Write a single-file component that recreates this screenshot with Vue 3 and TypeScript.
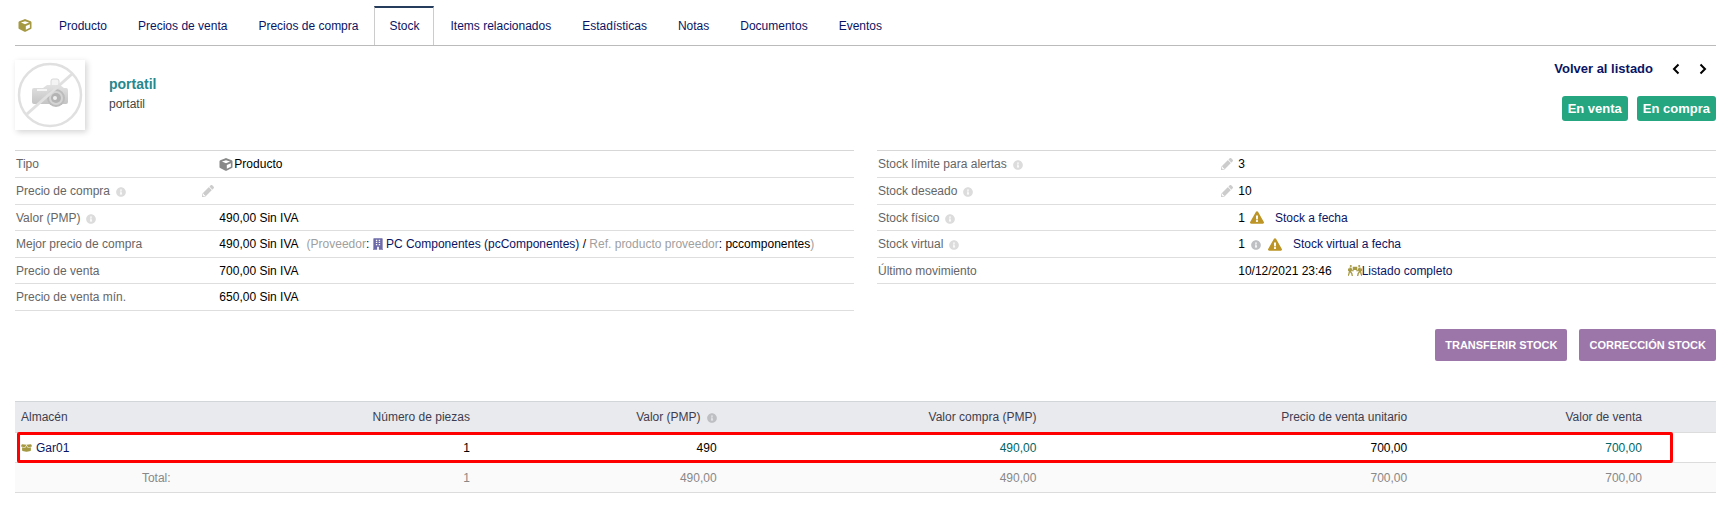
<script setup lang="ts">
import { h, type FunctionalComponent } from 'vue'

interface Glyph {
  box: string
  d: string
}

const windows = [64, 160, 256]
  .flatMap((y) => [128, 256].map((x) => `M${x} ${y}h64v56h-64z`))
  .join('')

const glyphs: Record<string, Glyph> = {
  cube: {
    box: '0 0 512 512',
    d: 'M239.1 6.3l-208 78c-18.7 7-31.1 25-31.1 45v225.1c0 18.2 10.3 34.8 26.5 42.9l208 104c13.5 6.8 29.4 6.8 42.9 0l208-104c16.3-8.1 26.5-24.8 26.5-42.9V129.3c0-20-12.4-37.9-31.1-44.9l-208-78C262 2.2 250 2.2 239.1 6.3zM256 84l160 57-160 62-160-62zM288 424V275.500l160-65v133.900z',
  },
  info: {
    box: '0 0 512 512',
    d: 'M256 8C119 8 8 119 8 256s111 248 248 248 248-111 248-248S393 8 256 8zm0 110c23.200 0 42 18.800 42 42s-18.800 42-42 42-42-18.800-42-42 18.800-42 42-42zm56 254c0 6.600-5.400 12-12 12h-88c-6.600 0-12-5.400-12-12v-24c0-6.600 5.400-12 12-12h12v-64h-12c-6.600 0-12-5.400-12-12v-24c0-6.600 5.400-12 12-12h64c6.600 0 12 5.400 12 12v100h12c6.600 0 12 5.400 12 12v24z',
  },
  pencil: {
    box: '0 0 512 512',
    d: 'M497.9 142.1l-46.100 46.100c-4.700 4.700-12.300 4.700-17 0l-111-111c-4.700-4.700-4.700-12.300 0-17l46.100-46.100c18.700-18.700 49.100-18.700 67.900 0l60.100 60.100c18.800 18.700 18.800 49.100 0 67.900zM284.200 99.800L21.600 362.400.4 483.900c-2.900 16.400 11.400 30.600 27.800 27.800l121.500-21.300 262.600-262.600c4.700-4.700 4.700-12.300 0-17l-111-111c-4.800-4.700-12.400-4.700-17.100 0zM88 424h48v36.300l-64.500 11.300-31.100-31.100L51.700 376H88v48z',
  },
  warning: {
    box: '0 0 576 512',
    d: 'M569.500 440C588 472 564.800 512 528 512H48c-37 0-60-40-41.500-72L246.400 24c18.500-32 64.700-32 83.200 0l239.900 416zM288 354c-25.400 0-46 20.600-46 46s20.600 46 46 46 46-20.600 46-46-20.600-46-46-46zm-43.700-165.300l7.400 136c.4 6.300 5.700 11.300 12 11.300h48.600c6.400 0 11.600-5 12-11.300l7.400-136c.4-6.900-5.100-12.700-12-12.700h-63.400c-6.900 0-12.400 5.800-12 12.700z',
  },
  building: {
    box: '0 0 448 512',
    d: `M448 480h-16V24c0-13-11-24-24-24H40C27 0 16 11 16 24v456H0v32h184v-128h80v128h184z${windows}`,
  },
  boxOpen: {
    box: '0 0 640 512',
    d: 'M425.700 256c-16.900 0-32.800-9-41.400-23.400L320 126l-64.200 106.600c-8.700 14.500-24.600 23.500-41.500 23.500-4.500 0-9-.6-13.300-1.900L64 215v178c0 14.700 10 27.500 24.200 31l216.200 54.100c10.200 2.500 20.900 2.500 31 0L551.800 424c14.200-3.600 24.200-16.400 24.200-31V215l-137 39.100c-4.300 1.300-8.800 1.900-13.300 1.900zm212.600-112.200L586.800 41c-3.100-6.200-9.800-9.800-16.700-8.900L320 64l91.700 152.100c3.800 6.300 11.400 9.300 18.500 7.300l197.900-56.500c9.900-2.900 14.700-13.900 10.200-23.100zM53.200 41L1.700 143.800c-4.600 9.200.3 20.200 10.100 23l197.900 56.500c7.100 2 14.700-1 18.500-7.300L320 64 69.800 32.100c-6.900-.8-13.500 2.700-16.600 8.900z',
  },
  carry: {
    box: '0 0 640 512',
    d: 'M128 0a48 48 0 1 0 0 96 48 48 0 0 0 0-96zM512 0a48 48 0 1 0 0 96 48 48 0 0 0 0-96zM216 80h208v152H216zM64 120h88l52 120h60v48h-92l-20-36v56l52 68 24 128-60 8-24-112-56-64-16 84-40 92-56-20 38-88 22-116zM0 160h44v120H0zM576 120h-88l-52 120h-60v48h92l20-36v56l-52 68-24 128 60 8 24-112 56-64 16 84 40 92 56-20-38-88-22-116zM596 160h44v120h-44z',
  },
}

const Icon: FunctionalComponent<{ name: string }> = (props) =>
  h('svg', { viewBox: glyphs[props.name].box, 'aria-hidden': 'true' }, [
    h('path', { d: glyphs[props.name].d, fill: 'currentColor', 'fill-rule': 'evenodd' }),
  ])
Icon.props = ['name']

const tabs = [
  'Producto',
  'Precios de venta',
  'Precios de compra',
  'Stock',
  'Items relacionados',
  'Estadísticas',
  'Notas',
  'Documentos',
  'Eventos',
]
const activeTab = 'Stock'
</script>

<template>
  <main class="page">
    <nav class="tabs" aria-label="Secciones del producto">
      <Icon name="cube" class="icon gold tab-icon" />
      <a v-for="tab in tabs" :key="tab" href="#" class="tab" :class="{ active: tab === activeTab }">{{ tab }}</a>
    </nav>

    <header class="banner">
      <div class="photo">
        <svg viewBox="0 0 70 70" role="img" aria-label="Sin foto">
          <defs>
            <linearGradient id="body" x1="0" y1="0" x2="0" y2="1">
              <stop offset="0" stop-color="#e2e2e2" />
              <stop offset="1" stop-color="#c4c4c4" />
            </linearGradient>
          </defs>
          <path d="M36 28v-7q0-2 2-2h4q2 0 2 2v7z" fill="#f4f4f4" stroke="#d8d8d8" />
          <path d="M17 30q0-2 2-2h9l4-3h13l4 3h2q2 0 2 2v12q0 2-2 2H19q-2 0-2-2z" fill="url(#body)" />
          <path d="M22 30h10" stroke="#f5f5f5" stroke-width="2" />
          <circle cx="41" cy="38" r="9" fill="#bcbcbc" />
          <circle cx="41" cy="38" r="7" fill="#d4d4d4" />
          <circle cx="41" cy="38" r="5" fill="#b4b4b4" />
          <circle cx="40" cy="38" r="2" fill="#eee" />
          <path d="M12 54L57 14" stroke="#e0e0e0" stroke-width="3" />
          <circle cx="35" cy="35" r="31" fill="none" stroke="#e0e0e0" stroke-width="2.500" />
        </svg>
      </div>
      <div class="title">
        <h1>portatil</h1>
        <p>portatil</p>
      </div>
      <div class="side">
        <div class="pager">
          <a href="#">Volver al listado</a>
          <a href="#" class="arrow" aria-label="Anterior"><svg viewBox="0 0 8 12"><path d="M6.500 1.500L2 6l4.500 4.500" /></svg></a>
          <a href="#" class="arrow" aria-label="Siguiente"><svg viewBox="0 0 8 12"><path d="M1.500 1.500L6 6l-4.500 4.500" /></svg></a>
        </div>
        <div class="badges"><span>En venta</span><span>En compra</span></div>
      </div>
    </header>

    <section class="details">
      <table class="fields left">
        <tbody>
          <tr>
            <th scope="row">Tipo</th>
            <td><div class="line"><Icon name="cube" class="icon grey" />Producto</div></td>
          </tr>
          <tr>
            <th scope="row">
              <div class="line">Precio de compra<Icon name="info" class="info" /><button type="button" class="edit" aria-label="Editar precio de compra"><Icon name="pencil" /></button></div>
            </th>
            <td></td>
          </tr>
          <tr>
            <th scope="row"><div class="line">Valor (PMP)<Icon name="info" class="info" /></div></th>
            <td>490,00 Sin IVA</td>
          </tr>
          <tr>
            <th scope="row">Mejor precio de compra</th>
            <td>
              <div class="line">
                490,00 Sin IVA
                <span class="supplier"><span class="muted">(Proveedor</span>: <a href="#"><Icon name="building" class="building" /> PC Componentes (pcComponentes)</a> / <span class="muted">Ref. producto proveedor</span>: pccomponentes<span class="muted">)</span></span>
              </div>
            </td>
          </tr>
          <tr>
            <th scope="row">Precio de venta</th>
            <td>700,00 Sin IVA</td>
          </tr>
          <tr>
            <th scope="row">Precio de venta mín.</th>
            <td>650,00 Sin IVA</td>
          </tr>
        </tbody>
      </table>

      <table class="fields right">
        <tbody>
          <tr>
            <th scope="row">
              <div class="line">Stock límite para alertas<Icon name="info" class="info" /><button type="button" class="edit" aria-label="Editar stock límite"><Icon name="pencil" /></button></div>
            </th>
            <td>3</td>
          </tr>
          <tr>
            <th scope="row">
              <div class="line">Stock deseado<Icon name="info" class="info" /><button type="button" class="edit" aria-label="Editar stock deseado"><Icon name="pencil" /></button></div>
            </th>
            <td>10</td>
          </tr>
          <tr>
            <th scope="row"><div class="line">Stock físico<Icon name="info" class="info" /></div></th>
            <td><div class="line">1<Icon name="warning" class="warning" /><a href="#">Stock a fecha</a></div></td>
          </tr>
          <tr>
            <th scope="row"><div class="line">Stock virtual<Icon name="info" class="info" /></div></th>
            <td><div class="line">1<Icon name="info" class="info dark" /><Icon name="warning" class="warning" /><a href="#">Stock virtual a fecha</a></div></td>
          </tr>
          <tr>
            <th scope="row">Último movimiento</th>
            <td><div class="line">10/12/2021 23:46<a href="#" class="line movements"><Icon name="carry" class="icon gold" />Listado completo</a></div></td>
          </tr>
        </tbody>
      </table>
    </section>

    <div class="actions">
      <button type="button">TRANSFERIR STOCK</button>
      <button type="button">CORRECCIÓN STOCK</button>
    </div>

    <table class="stock">
      <colgroup>
        <col class="c-name" /><col class="c-units" /><col class="c-pmp" /><col class="c-buy" /><col class="c-unit" /><col class="c-sell" /><col />
      </colgroup>
      <thead>
        <tr>
          <th scope="col">Almacén</th>
          <th scope="col">Número de piezas</th>
          <th scope="col"><div class="line end">Valor (PMP)<Icon name="info" class="info dark" /></div></th>
          <th scope="col">Valor compra (PMP)</th>
          <th scope="col">Precio de venta unitario</th>
          <th scope="col">Valor de venta</th>
          <td></td>
        </tr>
      </thead>
      <tbody>
        <tr class="marked">
          <td><a href="#" class="line"><Icon name="boxOpen" class="box gold" />Gar01</a><span class="marker"></span></td>
          <td>1</td>
          <td>490</td>
          <td class="amount">490,00</td>
          <td>700,00</td>
          <td class="amount">700,00</td>
          <td></td>
        </tr>
      </tbody>
      <tfoot>
        <tr>
          <td>Total:</td>
          <td>1</td>
          <td>490,00</td>
          <td>490,00</td>
          <td>700,00</td>
          <td>700,00</td>
          <td></td>
        </tr>
      </tfoot>
    </table>
  </main>
</template>

<style>
body {
  margin: 0;
  background: #fff;
}
</style>

<style scoped>
.page {
  padding: 6px 9px 12px 15px;
  font: 12px/16px "Liberation Sans", Arial, sans-serif;
  color: #000;
}
a {
  color: #0a1464;
  text-decoration: none;
}
button {
  font: inherit;
  border: 0;
  cursor: pointer;
}
table {
  border-collapse: collapse;
  table-layout: fixed;
  width: 100%;
}
th {
  font-weight: normal;
  text-align: left;
}
.line {
  display: flex;
  align-items: center;
  white-space: nowrap;
}
.line.end {
  justify-content: flex-end;
}
.icon {
  width: 14px;
  height: 13px;
  flex: none;
}
.gold {
  color: #a69944;
}
.grey {
  color: #888;
  margin-right: 1px;
}
.info {
  width: 10px;
  height: 10px;
  margin: 2px 0 0 6px;
  color: #dcdcdc;
}
.info.dark {
  color: #bdbfc3;
}

.tabs {
  display: flex;
  align-items: stretch;
  gap: 1px;
  border-bottom: 1px solid #bbb;
}
.tab-icon {
  align-self: center;
  margin: 0 11px 0 3px;
}
.tab {
  padding: 10px 14px 11px;
  border: solid transparent;
  border-width: 2px 1px 0;
}
.tab.active {
  border-color: #263c5c #ccc;
}

.banner {
  display: flex;
  margin: 14px 0 20px;
}
.photo {
  width: 70px;
  height: 70px;
  background: #fff;
  box-shadow: 2px 2px 6px #d4d4d4;
}
.photo svg {
  display: block;
}
.title {
  padding: 16px 0 0 24px;
}
.title h1 {
  margin: 0;
  font-size: 14px;
  line-height: 16px;
  color: #25888e;
}
.title p {
  margin: 4px 0 0;
  color: #444;
}
.side {
  margin-left: auto;
  font-size: 13px;
  font-weight: bold;
}
.pager {
  display: flex;
  align-items: center;
  justify-content: flex-end;
  gap: 19px;
  padding: 1px 9px 0 0;
}
.arrow svg {
  display: block;
  width: 8px;
  height: 12px;
  fill: none;
  stroke: #000;
  stroke-width: 2;
}
.badges {
  display: flex;
  justify-content: flex-end;
  gap: 9px;
  margin-top: 19px;
}
.badges span {
  padding: 5px 6px 4px;
  border-radius: 3px;
  background: #25a580;
  color: #fff;
}

.details {
  display: grid;
  grid-template-columns: 1fr 1fr;
  align-items: start;
  gap: 23px;
}
.fields {
  border-top: 1px solid #d7d7d7;
}
.fields tr {
  height: 27px;
  border-bottom: 1px solid #dedede;
}
.fields tr:nth-child(2n + 3) {
  height: 26px;
}
.fields th,
.fields td {
  padding: 0 1px;
}
.fields th {
  color: #666;
}
.left th {
  width: 24%;
}
.right th {
  width: 42.7%;
}
.edit {
  margin-left: auto;
  padding: 0 3px 0 0;
  background: none;
  color: #ccc;
}
.edit svg {
  display: block;
  width: 12px;
  height: 12px;
}
.supplier {
  margin-left: 8px;
}
.muted {
  color: #a0a0a0;
}
.building {
  width: 10px;
  height: 12px;
  vertical-align: -2px;
  color: #6c6aa8;
}
.warning {
  width: 14px;
  height: 13px;
  margin: 0 11px 0 5px;
  color: #bc9526;
}
.info.dark + .warning {
  margin-left: 7px;
}
.movements {
  margin-left: 16px;
}

.actions {
  display: flex;
  justify-content: flex-end;
  gap: 12px;
  margin-top: 18px;
}
.actions button {
  padding: 8px 10px;
  border-radius: 2px;
  background: #9c75a9;
  color: #fff;
  font-size: 11px;
  font-weight: bold;
}

.stock {
  margin-top: 40px;
  border-top: 1px solid #d3d6d8;
}
.stock tr {
  height: 30px;
  border-bottom: 1px solid #dcdcdc;
}
.stock thead tr {
  height: 31px;
}
.stock th,
.stock td {
  padding: 0 6px;
  text-align: right;
}
.stock thead {
  background: #e9eaed;
  color: #3d3d50;
}
.stock thead th:first-child,
.stock tbody td:first-child {
  text-align: left;
}
.stock tfoot {
  background: #fafafa;
  color: #888;
}
.stock .amount {
  color: #006666;
}
.c-name {
  width: 9.5%;
}
.c-units {
  width: 17.6%;
}
.c-pmp {
  width: 14.5%;
}
.c-buy {
  width: 18.8%;
}
.c-unit {
  width: 21.8%;
}
.c-sell {
  width: 13.8%;
}
.box {
  width: 11px;
  height: 10px;
  margin-right: 4px;
}
.marked {
  position: relative;
}
.marker {
  position: absolute;
  inset: -1px 43px -1px 2px;
  border: 3px solid #f00;
  border-radius: 2px;
  pointer-events: none;
}
</style>
